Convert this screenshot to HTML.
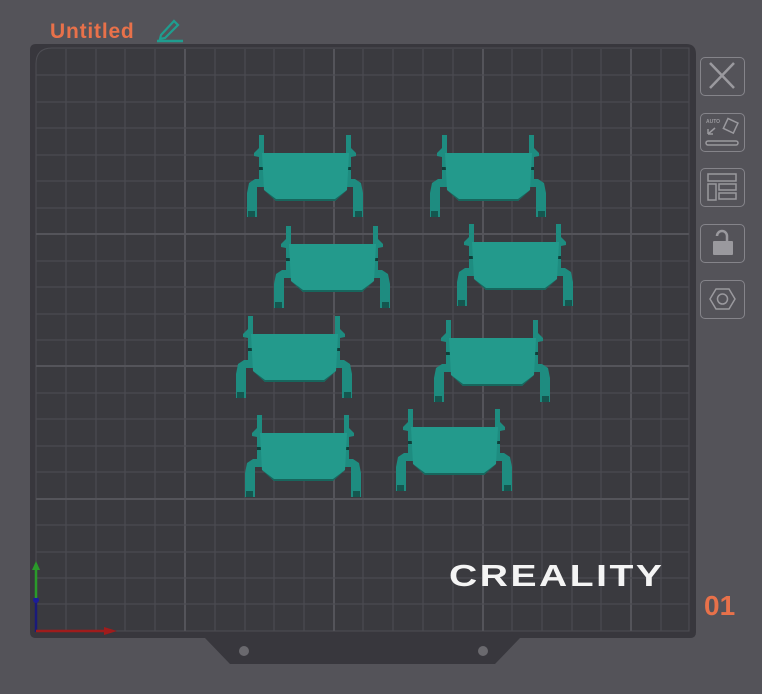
<!DOCTYPE html>
<html><head><meta charset="utf-8"><style>
html,body{margin:0;padding:0;width:762px;height:694px;overflow:hidden;background:#545359;font-family:"Liberation Sans",sans-serif}
.t{position:absolute;left:50px;top:20px;color:#e8714a;font-weight:bold;font-size:21px;letter-spacing:0.8px}
.btn{position:absolute;left:700px;width:45px;height:39px;border:1.5px solid #85848a;border-radius:5px;box-sizing:border-box}
.cr{position:absolute;left:449px;top:558px;color:#f4f4f4;font-size:31px;font-weight:bold;letter-spacing:2px;transform:scaleX(1.26);transform-origin:left}
.n{position:absolute;left:704px;top:590px;color:#e8714a;font-size:28px;font-weight:bold}
</style></head><body>
<div class="t">Untitled</div>
<svg style="position:absolute;left:155px;top:16px" width="30" height="28"><path d="M6 19 L19 5 L23 9 L10 22 L5 23 Z" fill="none" stroke="#1f9d8f" stroke-width="2.2"/><line x1="2" y1="25" x2="28" y2="25" stroke="#1f9d8f" stroke-width="2.5"/></svg>
<svg style="position:absolute;left:0;top:0" width="762" height="694">
<defs>
<symbol id="p" viewBox="0 0 116 82" width="116" height="82">
<rect x="12" y="0" width="5" height="44" fill="#1e8c80"/>
<polygon points="7,18 12,13 12,22 7,21" fill="#1e8c80"/>
<rect x="12" y="32" width="5" height="3" fill="#0f3f3a"/>
<polygon points="0,58 2,48 8,44 17,44 17,52 10,52 10,82 0,82" fill="#1e8c80"/>
<rect x="1" y="76" width="7" height="6" fill="#15564f"/>
<rect x="99" y="0" width="5" height="44" fill="#1e8c80"/>
<polygon points="109,18 104,13 104,22 109,21" fill="#1e8c80"/>
<rect x="99" y="32" width="5" height="3" fill="#0f3f3a"/>
<polygon points="116,58 114,48 108,44 99,44 99,52 106,52 106,82 116,82" fill="#1e8c80"/>
<rect x="108" y="76" width="7" height="6" fill="#15564f"/>
<polygon points="15,18 102,18 100,55 88,66 29,66 17,55" fill="#239a8c"/>
<polygon points="17,55 29,66 88,66 100,55 88,64 29,64" fill="#17665d"/>
</symbol>
</defs>
<path d="M36 44 H686 Q696 44 696 54 V632 Q696 638 690 638 H520 L495 664 H230 L205 638 H36 Q30 638 30 632 V50 Q30 44 36 44 Z" fill="#38373d"/>
<circle cx="244" cy="651" r="5" fill="#6a696e"/><circle cx="483" cy="651" r="5" fill="#6a696e"/>
<path d="M52 48 H689 V631 H36 V64 Q36 48 52 48Z" fill="#3a3a3f" stroke="#4e4e54" stroke-width="1"/>
<g stroke="#4b4b51" stroke-width="1.2">
<line x1="66" y1="49" x2="66" y2="631"/><line x1="96" y1="49" x2="96" y2="631"/><line x1="125" y1="49" x2="125" y2="631"/><line x1="155" y1="49" x2="155" y2="631"/><line x1="185" y1="49" x2="185" y2="631" stroke="#54545a" stroke-width="2"/><line x1="215" y1="49" x2="215" y2="631"/><line x1="245" y1="49" x2="245" y2="631"/><line x1="274" y1="49" x2="274" y2="631"/><line x1="304" y1="49" x2="304" y2="631"/><line x1="334" y1="49" x2="334" y2="631" stroke="#54545a" stroke-width="2"/><line x1="363" y1="49" x2="363" y2="631"/><line x1="393" y1="49" x2="393" y2="631"/><line x1="423" y1="49" x2="423" y2="631"/><line x1="453" y1="49" x2="453" y2="631"/><line x1="483" y1="49" x2="483" y2="631" stroke="#54545a" stroke-width="2"/><line x1="512" y1="49" x2="512" y2="631"/><line x1="542" y1="49" x2="542" y2="631"/><line x1="572" y1="49" x2="572" y2="631"/><line x1="601" y1="49" x2="601" y2="631"/><line x1="631" y1="49" x2="631" y2="631" stroke="#54545a" stroke-width="2"/><line x1="661" y1="49" x2="661" y2="631"/>
<line x1="36" y1="75" x2="689" y2="75"/><line x1="36" y1="102" x2="689" y2="102"/><line x1="36" y1="128" x2="689" y2="128"/><line x1="36" y1="155" x2="689" y2="155"/><line x1="36" y1="181" x2="689" y2="181"/><line x1="36" y1="234" x2="689" y2="234" stroke="#54545a" stroke-width="2"/><line x1="36" y1="208" x2="689" y2="208"/><line x1="36" y1="261" x2="689" y2="261"/><line x1="36" y1="287" x2="689" y2="287"/><line x1="36" y1="314" x2="689" y2="314"/><line x1="36" y1="340" x2="689" y2="340"/><line x1="36" y1="366" x2="689" y2="366" stroke="#54545a" stroke-width="2"/><line x1="36" y1="393" x2="689" y2="393"/><line x1="36" y1="419" x2="689" y2="419"/><line x1="36" y1="446" x2="689" y2="446"/><line x1="36" y1="472" x2="689" y2="472"/><line x1="36" y1="499" x2="689" y2="499" stroke="#54545a" stroke-width="2"/><line x1="36" y1="525" x2="689" y2="525"/><line x1="36" y1="552" x2="689" y2="552"/><line x1="36" y1="578" x2="689" y2="578"/><line x1="36" y1="604" x2="689" y2="604"/>
</g>
<use href="#p" x="247" y="135"/><use href="#p" x="430" y="135"/>
<use href="#p" x="274" y="226"/><use href="#p" x="457" y="224"/>
<use href="#p" x="236" y="316"/><use href="#p" x="434" y="320"/>
<use href="#p" x="245" y="415"/><use href="#p" x="396" y="409"/>
<line x1="36" y1="632" x2="36" y2="598" stroke="#1a1a7a" stroke-width="2.5"/>
<circle cx="36" cy="600" r="3" fill="#1c1c9a"/>
<line x1="36" y1="598" x2="36" y2="570" stroke="#2a9a2a" stroke-width="2.5"/>
<polygon points="32,570 40,570 36,561" fill="#2a9a2a"/>
<line x1="36" y1="631" x2="108" y2="631" stroke="#a01c1c" stroke-width="2.5"/>
<polygon points="104,627 117,631 104,635" fill="#a01c1c"/>
</svg>
<div class="cr">CREALITY</div>
<div class="n">01</div>
<div class="btn" style="top:57px"><svg width="42" height="36"><path d="M9 5 L33 30 M33 5 L9 30" stroke="#9a999e" stroke-width="2.5"/></svg></div>
<div class="btn" style="top:113px"><svg width="42" height="36"><text x="5" y="9" font-size="5" fill="#9a999e" font-family="Liberation Sans" font-weight="bold">AUTO</text><rect x="24" y="6" width="11" height="11" transform="rotate(25 29 12)" fill="none" stroke="#9a999e" stroke-width="1.5"/><path d="M7 20 L14 14 M7 20 L7 15 M7 20 L12 20" stroke="#9a999e" stroke-width="1.5" fill="none"/><rect x="5" y="27" width="32" height="4" rx="2" fill="none" stroke="#9a999e" stroke-width="1.5"/></svg></div>
<div class="btn" style="top:168px"><svg width="42" height="36"><rect x="7" y="5" width="28" height="7" fill="none" stroke="#9a999e" stroke-width="1.5"/><rect x="7" y="15" width="8" height="16" fill="none" stroke="#9a999e" stroke-width="1.5"/><rect x="18" y="15" width="17" height="6" fill="none" stroke="#9a999e" stroke-width="1.5"/><rect x="18" y="24" width="17" height="6" fill="none" stroke="#9a999e" stroke-width="1.5"/></svg></div>
<div class="btn" style="top:224px"><svg width="42" height="36"><path d="M26 16 V11 A5 5 0 0 0 16 11" fill="none" stroke="#9a999e" stroke-width="2.5"/><rect x="12" y="16" width="20" height="14" rx="1" fill="#9a999e"/></svg></div>
<div class="btn" style="top:280px"><svg width="42" height="36"><polygon points="9,18 15,8 28,8 34,18 28,28 15,28" fill="none" stroke="#9a999e" stroke-width="1.5"/><circle cx="21.5" cy="18" r="5" fill="none" stroke="#9a999e" stroke-width="1.5"/></svg></div>
</body></html>
